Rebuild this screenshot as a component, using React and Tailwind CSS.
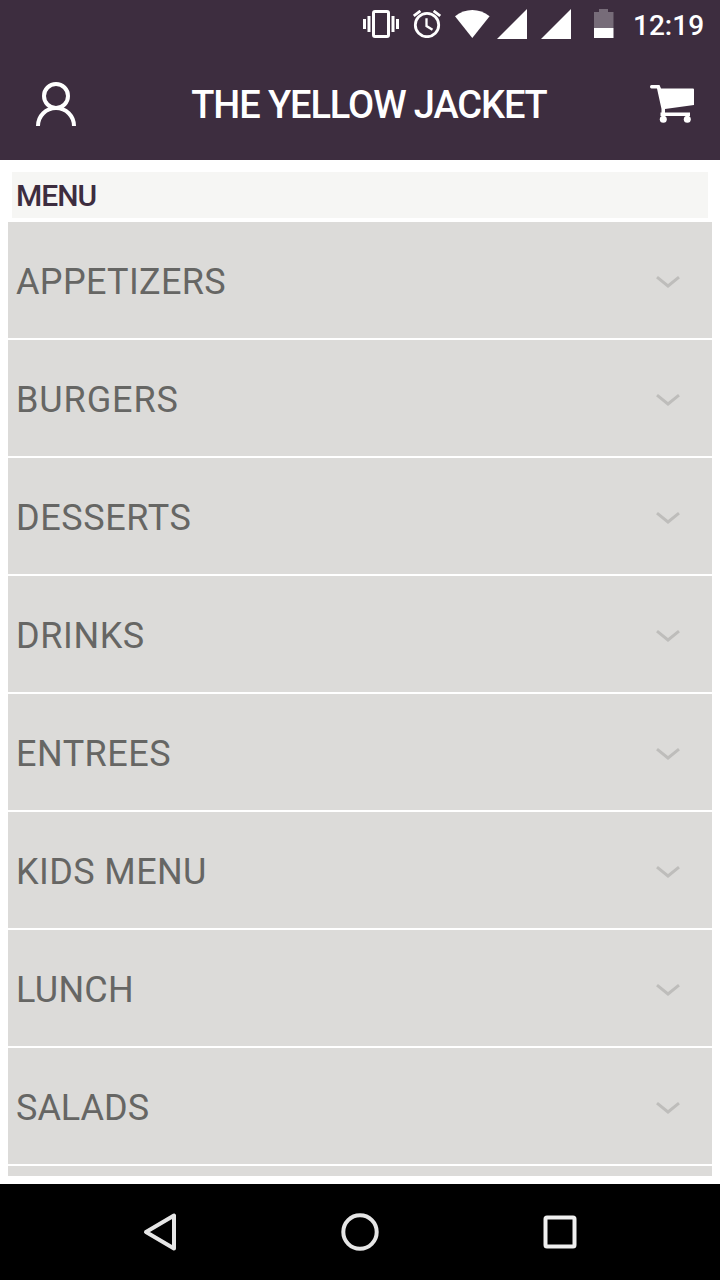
const categories = [
  { name: 'APPETIZERS', tracking: 'tracking-[0.35px]' },
  { name: 'BURGERS', tracking: 'tracking-[0.9px]' },
  { name: 'DESSERTS', tracking: 'tracking-[0.6px]' },
  { name: 'DRINKS', tracking: 'tracking-[0.6px]' },
  { name: 'ENTREES', tracking: 'tracking-[0.5px]' },
  { name: 'KIDS MENU', tracking: 'tracking-[0.4px]' },
  { name: 'LUNCH', tracking: 'tracking-[0.3px]' },
  { name: 'SALADS', tracking: 'tracking-normal' },
]

function SignalIcon() {
  return (
    <svg className="w-[30px] h-[30px] shrink-0" viewBox="0 0 30 30" fill="#fff">
      <path d="M30 0V30H0Z" />
    </svg>
  )
}

function StatusBar() {
  return (
    <div className="h-12 flex items-center pl-[363px]">
      <svg className="w-9 h-7 shrink-0" viewBox="0 0 36 28" fill="#fff">
        <path d="M0 9h3v10H0zM4.500 6h3v16h-3zM28.500 6h3v16h-3zM33 9h3v10h-3z" />
        <rect x="10.500" y="1.500" width="15" height="25" rx="1.500" fill="none" stroke="#fff" strokeWidth="3" />
      </svg>
      <svg className="w-7 h-7 shrink-0 ml-3.5" viewBox="0 0 28 28" fill="none" stroke="#fff">
        <circle cx="14" cy="15" r="11.700" strokeWidth="2.800" />
        <path d="M13.500 8.300v7.700l6 3.800" strokeWidth="2.300" />
        <path d="M0.800 6L7.400 0.900M27.200 6L20.600 0.900" strokeWidth="2.800" />
      </svg>
      <svg className="w-[35px] h-7 shrink-0 ml-3.5" viewBox="0 0 35 28" fill="#fff">
        <path d="M17.300 28L0 6.200Q8 0 17.300 0T34.600 6.200Z" />
      </svg>
      <div className="flex ml-[7px] gap-3.5">
        <SignalIcon />
        <SignalIcon />
      </div>
      <svg className="w-5 h-[30px] shrink-0 ml-[23px]" viewBox="0 0 20 30" fill="#fff">
        <path d="M0 3h5V0h9v3h5.500v16H0z" fillOpacity="0.300" />
        <path d="M0 19h19.500v10H0z" />
      </svg>
      <span className="ml-[19px] mt-1 text-[28px] leading-8 font-medium text-white">12:19</span>
    </div>
  )
}

function Header() {
  return (
    <div className="h-28 flex items-center justify-between pl-9 pr-[26px]">
      <svg className="w-10 h-11 shrink-0" viewBox="0 0 40 44" fill="none" stroke="#fff" strokeWidth="4">
        <circle cx="20" cy="14" r="12" />
        <path d="M2 44C2 34 10 26 20 26s18 8 18 18" />
      </svg>
      <h1 className="ml-3 mt-0.5 text-[38px] leading-[50px] font-medium tracking-[-1.1px] text-white whitespace-nowrap">THE YELLOW JACKET</h1>
      <svg className="w-11 h-[38px] shrink-0" viewBox="0 0 44 38" fill="#fff">
        <path d="M1.500 0H9.500L11 3.500H43Q44 3.500 44 4.500V20L15 24V27.500H40V31H10.500V27.500H11.500V24L7 3.500H1.500Q0 3.500 0 1.800T1.500 0Z" />
        <circle cx="13.300" cy="34.300" r="3.500" />
        <circle cx="37.300" cy="34.300" r="3.500" />
      </svg>
    </div>
  )
}

function MenuRow({ name, tracking }) {
  return (
    <div className="h-[116px] shrink-0 flex items-center justify-between bg-[#dcdbd9] pl-2 pr-8">
      <span className={`mt-1 text-[36px] leading-[42px] text-[#666664] ${tracking}`}>{name}</span>
      <svg className="w-6 h-3 mt-1" viewBox="0 0 24 12" fill="none" stroke="#bebdbb" strokeWidth="3">
        <path d="M1 1.200L12 10L23 1.200" />
      </svg>
    </div>
  )
}

function NavBar() {
  return (
    <div className="h-24 flex items-center justify-between bg-black px-[142px]">
      <svg className="w-9 h-10" viewBox="0 0 36 40" fill="none" stroke="#e6e6e6" strokeWidth="4" strokeLinejoin="round">
        <path d="M32 3.500V36.500L4 20Z" />
      </svg>
      <svg className="w-10 h-10" viewBox="0 0 40 40" fill="none" stroke="#e6e6e6" strokeWidth="4">
        <circle cx="20" cy="20" r="16.700" />
      </svg>
      <svg className="w-9 h-10" viewBox="0 0 36 40" fill="none" stroke="#f0f0f0" strokeWidth="4">
        <rect x="3.500" y="5.500" width="29" height="29" rx="1.500" />
      </svg>
    </div>
  )
}

export default function App() {
  return (
    <div className="w-[720px] h-[1280px] flex flex-col overflow-hidden bg-white font-['Roboto',sans-serif]">
      <div className="bg-[#3d2d3f]">
        <StatusBar />
        <Header />
      </div>

      <div className="flex-1 min-h-0 flex flex-col px-2 pt-3 pb-2">
        <div className="mx-1 h-[46px] shrink-0 flex items-center bg-[#f6f6f4] pl-1">
          <h2 className="mt-0.5 text-[30px] leading-9 font-medium tracking-[-1px] text-[#3d2d3f]">MENU</h2>
        </div>
        <div className="mt-1 flex-1 min-h-0 flex flex-col gap-0.5 overflow-hidden">
          {categories.map((category) => (
            <MenuRow key={category.name} name={category.name} tracking={category.tracking} />
          ))}
          <div className="flex-1 bg-[#dcdbd9]" />
        </div>
      </div>

      <NavBar />
    </div>
  )
}
